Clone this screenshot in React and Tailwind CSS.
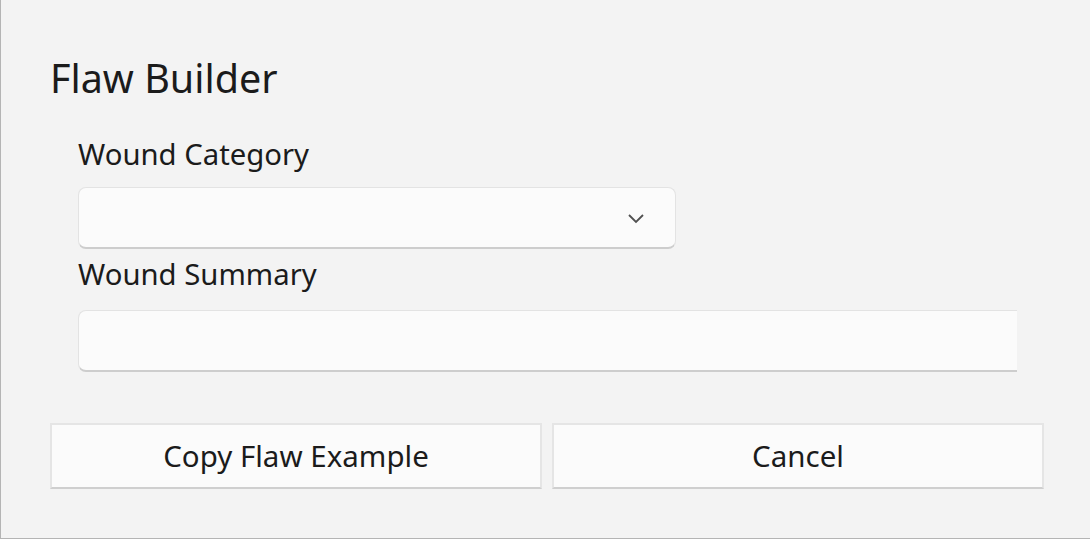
export default function App() {
    return (
    <div className="w-[1090px] h-[539px] bg-[#f3f3f3] border-l border-b border-[#b4b4b4] text-[#1b1b1b] flex flex-col pl-[49px] pr-[45px]" style={{fontFamily: '"Noto Sans", "Open Sans", sans-serif'}}>
        <div className="text-[39.5px] leading-[48px] mt-[54px]">Flaw Builder</div>
        <div className="pl-[28px] flex flex-col">
            <div className="text-[29.3px] leading-[36px] mt-[34px]">Wound Category</div>
            <div className="mt-[15px] w-[598px] h-[62px] rounded-[8px] bg-[#fbfbfb] border border-[#e3e3e3] border-b-[2px] border-b-[#cdcdcd] flex items-center justify-end pr-[30px]">
                <svg width="18" height="12" viewBox="0 0 18 12" fill="none" stroke="#505050" strokeWidth="1.8">
                    <path d="M2 3 L9 10 L16 3" />
                </svg>
            </div>
            <div className="text-[29.3px] leading-[36px] mt-[7px]">Wound Summary</div>
            <div className="mt-[18px] w-[939px] h-[62px] rounded-l-[8px] bg-[#fbfbfb] border border-r-0 border-[#e3e3e3] border-b-[2px] border-b-[#cdcdcd]"></div>
        </div>
        <div className="mt-[51px] flex gap-[10px]">
            <button className="w-[492px] h-[66px] bg-[#fbfbfb] border-2 border-[#e5e5e5] border-b-[#cfcfcf] text-[29.5px]">Copy Flaw Example</button>
            <button className="w-[492px] h-[66px] bg-[#fbfbfb] border-2 border-[#e5e5e5] border-b-[#cfcfcf] text-[29.5px]">Cancel</button>
        </div>
    </div>
    );
}
